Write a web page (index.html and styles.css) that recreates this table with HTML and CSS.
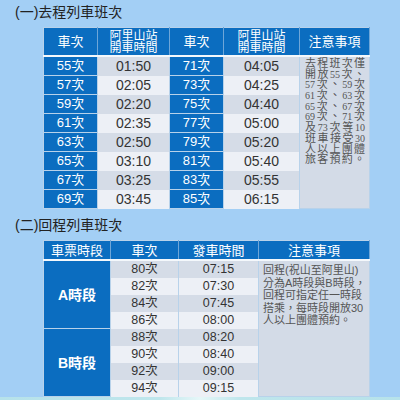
FILE: index.html
```html
<!DOCTYPE html>
<html lang="zh-Hant">
<head>
<meta charset="utf-8">
<link rel="stylesheet" href="styles.css">
</head>
<body>
<div class="page">
  <h2 class="title">(一)去程列車班次</h2>
  <table class="tbl t1">
    <colgroup><col class="c1"><col class="c2"><col class="c3"><col class="c4"><col class="c5"></colgroup>
    <tr class="head">
      <th>車次</th><th class="two">阿里山站<br>開車時間</th><th>車次</th><th class="two">阿里山站<br>開車時間</th><th>注意事項</th>
    </tr>
    <tr class="dk"><td class="no">55次</td><td class="tm">01:50</td><td class="no">71次</td><td class="tm">04:05</td>
      <td class="note" rowspan="8">
        <span class="ln">去程班次僅</span>
        <span class="ln">開放<i>55</i>次、</span>
        <span class="ln"><i>57</i>次、<i>59</i>次</span>
        <span class="ln"><i>61</i>次、<i>63</i>次</span>
        <span class="ln"><i>65</i>次、<i>67</i>次</span>
        <span class="ln"><i>69</i>次、<i>71</i>次</span>
        <span class="ln">及<i>73</i>次等<i>10</i></span>
        <span class="ln">班車接受<i>30</i></span>
        <span class="ln">人以上團體</span>
        <span class="ln">旅客預約。</span>
      </td></tr>
    <tr class="lt"><td class="no">57次</td><td class="tm">02:05</td><td class="no">73次</td><td class="tm">04:25</td></tr>
    <tr class="dk"><td class="no">59次</td><td class="tm">02:20</td><td class="no">75次</td><td class="tm">04:40</td></tr>
    <tr class="lt"><td class="no">61次</td><td class="tm">02:35</td><td class="no">77次</td><td class="tm">05:00</td></tr>
    <tr class="dk"><td class="no">63次</td><td class="tm">02:50</td><td class="no">79次</td><td class="tm">05:20</td></tr>
    <tr class="lt"><td class="no">65次</td><td class="tm">03:10</td><td class="no">81次</td><td class="tm">05:40</td></tr>
    <tr class="dk"><td class="no">67次</td><td class="tm">03:25</td><td class="no">83次</td><td class="tm">05:55</td></tr>
    <tr class="lt"><td class="no">69次</td><td class="tm">03:45</td><td class="no">85次</td><td class="tm">06:15</td></tr>
  </table>

  <h2 class="title title2">(二)回程列車班次</h2>
  <table class="tbl t2">
    <colgroup><col class="d1"><col class="d2"><col class="d3"><col class="d4"></colgroup>
    <tr class="head">
      <th>車票時段</th><th>車次</th><th>發車時間</th><th>注意事項</th>
    </tr>
    <tr class="dk"><td class="seg" rowspan="4">A時段</td><td class="sm">80次</td><td class="sm">07:15</td>
      <td class="note2" rowspan="8">回程(祝山至阿里山)<br>分為A時段與B時段，<br>回程可指定任一時段<br>搭乘，每時段開放30<br>人以上團體預約。</td></tr>
    <tr class="lt"><td class="sm">82次</td><td class="sm">07:30</td></tr>
    <tr class="dk"><td class="sm">84次</td><td class="sm">07:45</td></tr>
    <tr class="lt"><td class="sm">86次</td><td class="sm">08:00</td></tr>
    <tr class="dk"><td class="seg" rowspan="4">B時段</td><td class="sm">88次</td><td class="sm">08:20</td></tr>
    <tr class="lt"><td class="sm">90次</td><td class="sm">08:40</td></tr>
    <tr class="dk"><td class="sm">92次</td><td class="sm">09:00</td></tr>
    <tr class="lt"><td class="sm">94次</td><td class="sm">09:15</td></tr>
  </table>
  <div class="strip"></div>
</div>
</body>
</html>
```
FILE: styles.css
```css
html, body {
  margin: 0;
  padding: 0;
  background: #a3cff5;
}
body {
  width: 400px;
  height: 400px;
  overflow: hidden;
  font-family: "Liberation Sans", "Noto Sans CJK TC", sans-serif;
}
.page {
  display: flex;
  flex-direction: column;
  align-items: flex-start;
}
.title {
  margin: 4px 0 0 15px;
  font-size: 14px;
  line-height: 16px;
  font-weight: normal;
  color: #222;
}
.title2 {
  margin-top: 8px;
}
.tbl {
  margin-left: 43px;
  border-collapse: collapse;
  table-layout: fixed;
  border: 1px solid #c6ddf2;
}
.t1 { margin-top: 7px; width: 326px; }
.t2 { margin-top: 7px; width: 326px; }
.c1 { width: 54px; }
.c2 { width: 72px; }
.c3 { width: 54px; }
.c4 { width: 76px; }
.c5 { width: 70px; }
.d1 { width: 67px; }
.d2 { width: 68px; }
.d3 { width: 80px; }
.d4 { width: 111px; }
.tbl th, .tbl td {
  padding: 0;
  border: 1px solid #b8d2ea;
  text-align: center;
  vertical-align: middle;
}
.head th {
  background: #0b6dc0;
  color: #fff;
  font-weight: normal;
  font-size: 13px;
  line-height: 15px;
  border-bottom: 2px solid #f4f8fc;
  border-right-color: #6ea6d8;
}
.t1 .head th { height: 26px; }
.t2 .head th { height: 18px; }
.head th.two {
  font-size: 12px;
  line-height: 12.5px;
  padding-top: 1px;
}
.t1 td { height: 18px; line-height: 16px; }
.t2 td { height: 16px; line-height: 14px; }
td.no {
  background: #0b6dc0;
  color: #fff;
  font-size: 13px;
}
.dk td.tm, .dk td.sm { background: #d5dce7; }
.lt td.tm, .lt td.sm { background: #edf0f6; }
td.tm {
  color: #333;
  font-size: 14px;
  border-top-color: transparent;
  border-bottom-color: transparent;
}
td.sm {
  color: #333;
  font-size: 12.5px;
  border-top-color: transparent;
  border-bottom-color: transparent;
}
.t1 td.note, .t2 td.note2 {
  background: #d3dbe7;
  vertical-align: top;
  color: #555;
}
.t1 td.note {
  padding: 1px 4px 0 5px;
  font-family: "Liberation Serif", "Noto Sans CJK TC", serif;
  font-size: 11px;
  line-height: 10.7px;
}
.ln {
  display: block;
  height: 10.7px;
  text-align: justify;
  text-align-last: justify;
}
.ln i {
  font-style: normal;
  font-size: 10px;
}
.t2 td.note2 {
  padding: 3px 0 0 4px;
  text-align: left;
  font-size: 11px;
  line-height: 12.5px;
}
td.seg {
  background: #0b6dc0;
  color: #fff;
  font-size: 14px;
  font-weight: bold;
}
.strip {
  width: 400px;
  height: 6px;
  background: linear-gradient(90deg, #b6e2ea 0%, #bfe6ec 40%, #e6f7f8 50%, #bfe6ec 60%, #b6e2ea 100%);
}
```
